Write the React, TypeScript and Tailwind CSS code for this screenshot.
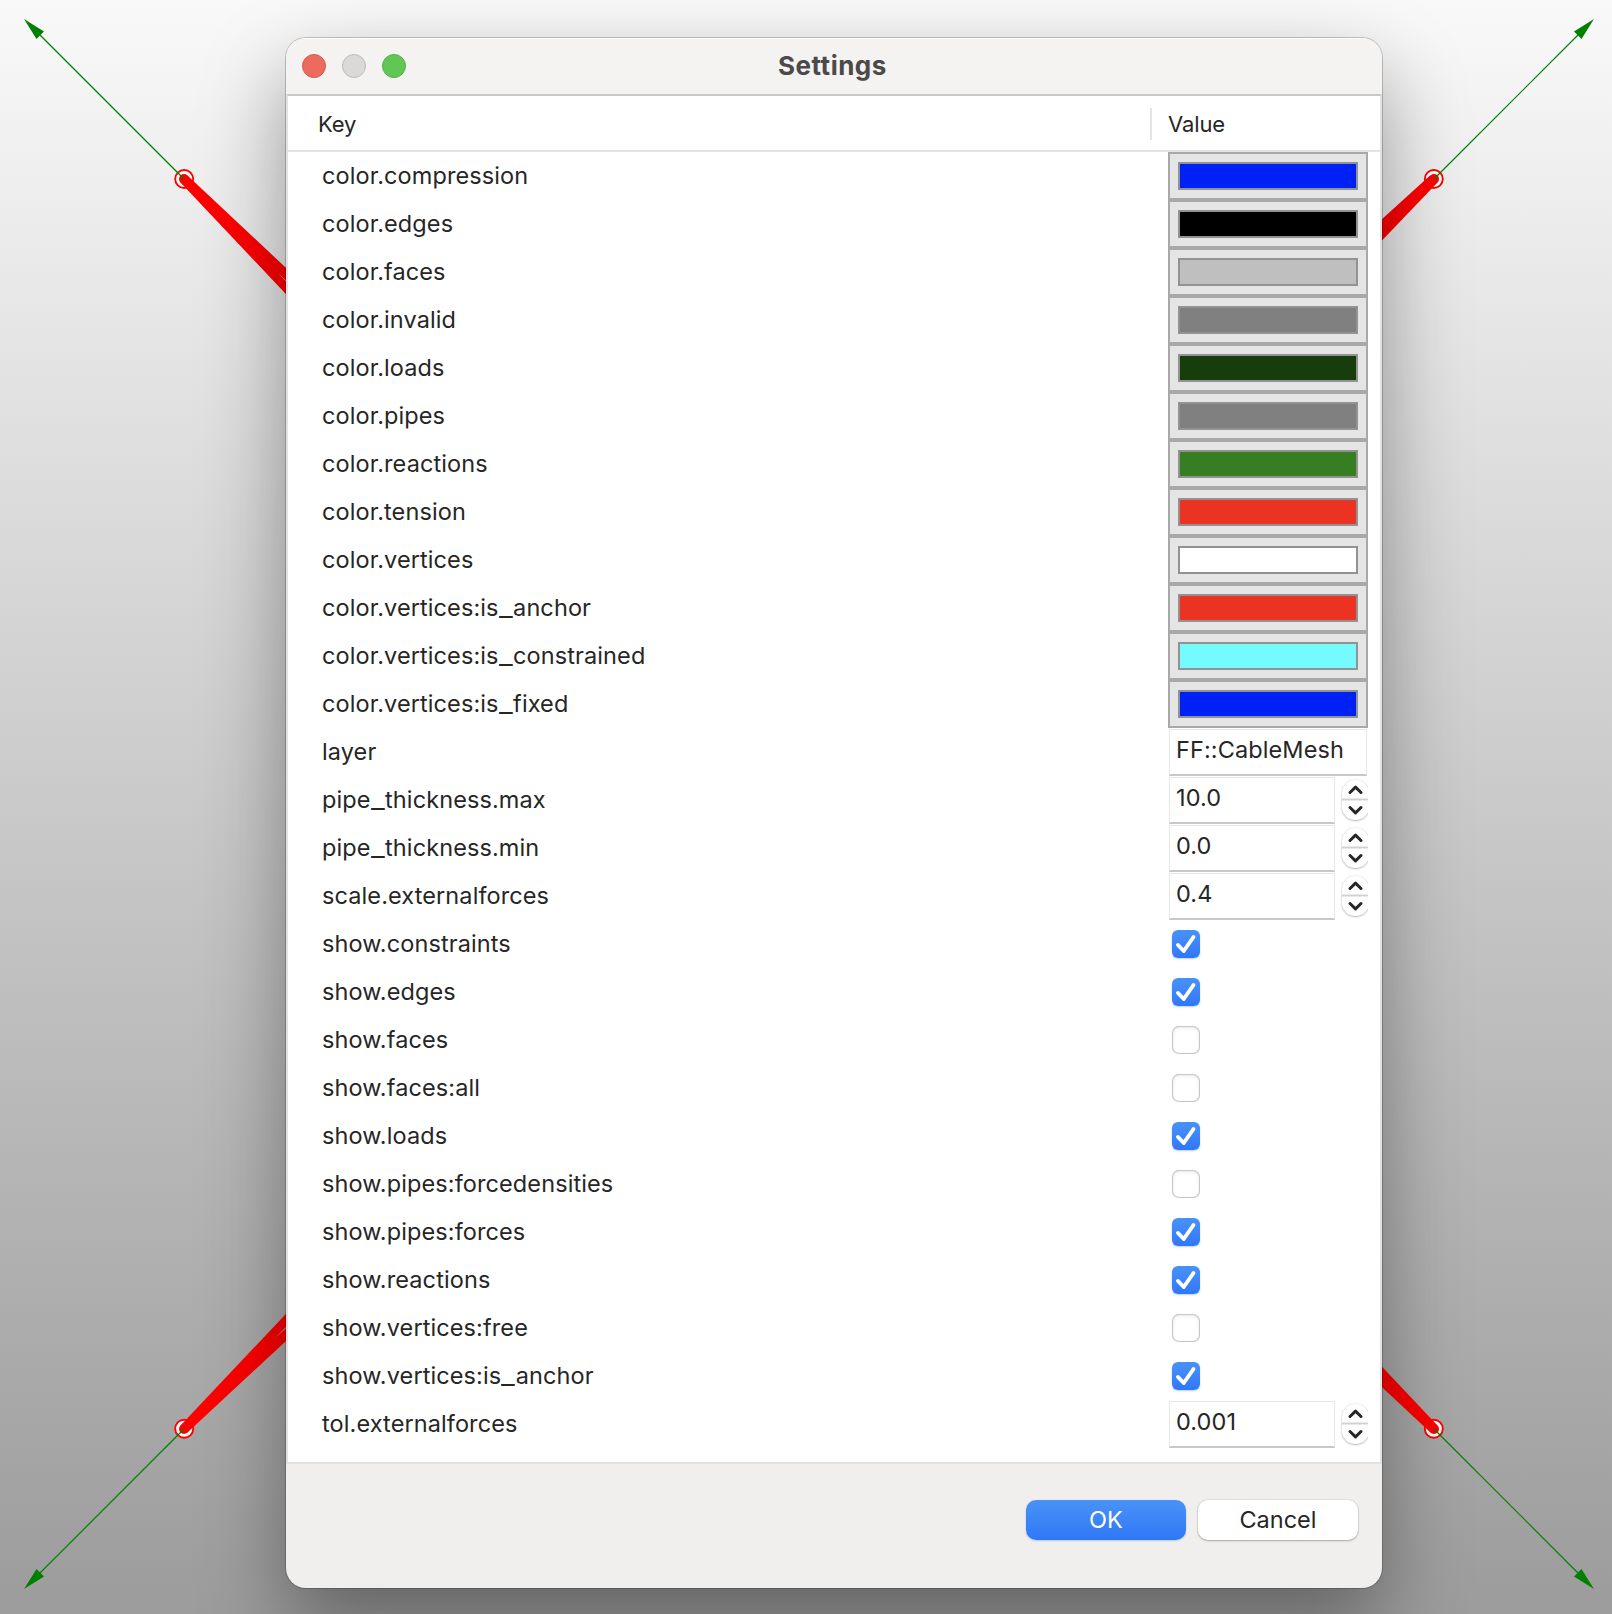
import React from "react";

type Row = { key: string } & (
  | { kind: "color"; value: string }
  | { kind: "text"; value: string }
  | { kind: "number"; value: string }
  | { kind: "check"; value: boolean }
);

const rows: Row[] = [
  { key: "color.compression", kind: "color", value: "#0021f5" },
  { key: "color.edges", kind: "color", value: "#000000" },
  { key: "color.faces", kind: "color", value: "#bfbfbf" },
  { key: "color.invalid", kind: "color", value: "#808080" },
  { key: "color.loads", kind: "color", value: "#183d0c" },
  { key: "color.pipes", kind: "color", value: "#808080" },
  { key: "color.reactions", kind: "color", value: "#377e22" },
  { key: "color.tension", kind: "color", value: "#ea3323" },
  { key: "color.vertices", kind: "color", value: "#ffffff" },
  { key: "color.vertices:is_anchor", kind: "color", value: "#ea3323" },
  { key: "color.vertices:is_constrained", kind: "color", value: "#75fbfd" },
  { key: "color.vertices:is_fixed", kind: "color", value: "#0021f5" },
  { key: "layer", kind: "text", value: "FF::CableMesh" },
  { key: "pipe_thickness.max", kind: "number", value: "10.0" },
  { key: "pipe_thickness.min", kind: "number", value: "0.0" },
  { key: "scale.externalforces", kind: "number", value: "0.4" },
  { key: "show.constraints", kind: "check", value: true },
  { key: "show.edges", kind: "check", value: true },
  { key: "show.faces", kind: "check", value: false },
  { key: "show.faces:all", kind: "check", value: false },
  { key: "show.loads", kind: "check", value: true },
  { key: "show.pipes:forcedensities", kind: "check", value: false },
  { key: "show.pipes:forces", kind: "check", value: true },
  { key: "show.reactions", kind: "check", value: true },
  { key: "show.vertices:free", kind: "check", value: false },
  { key: "show.vertices:is_anchor", kind: "check", value: true },
  { key: "tol.externalforces", kind: "number", value: "0.001" },
];

function Anchor({ x, y }: { x: number; y: number }) {
  return <circle cx={x} cy={y} r="9" fill="#fff" stroke="#f00" strokeWidth="1.9" />;
}

function Viewport() {
  return (
    <svg className="absolute inset-0" width="1612" height="1614" viewBox="0 0 1612 1614">
      <Anchor x={184.2} y={179} />
      <Anchor x={1433.8} y={179} />
      <Anchor x={184.2} y={1428.8} />
      <Anchor x={1433.8} y={1428.8} />
      <g fill="#f00">
        <circle cx="184" cy="179" r="5" />
        <circle cx="1434" cy="179" r="5" />
        <circle cx="184" cy="1429" r="5" />
        <circle cx="1434" cy="1429" r="5" />
        <path d="M187.500 175.500 L300 281 L300 294 L278 273 L300 296 V309 L180.500 182.500 Z" />
        <path d="M1430 175.500 L1370 230 V253 L1437.500 182.500 Z" />
        <path d="M180.500 1425.500 L300 1299 V1313 L274 1339 L300 1316 V1328 L187.500 1432.500 Z" />
        <path d="M1437.500 1425.500 L1370 1354 V1376 L1430.500 1432.500 Z" />
      </g>
      <g stroke="#008000" strokeWidth="1.2" fill="none">
        <path d="M184 179 L38 33" />
        <path d="M1434 179 L1580 33" />
        <path d="M184 1429 L38 1575" />
        <path d="M1434 1429 L1580 1575" />
      </g>
      <g fill="#008000">
        <path d="M24 19 L44 31.500 L36.500 39 Z" />
        <path d="M1594 19 L1574 31.500 L1581.500 39 Z" />
        <path d="M24 1589 L44 1576.500 L36.500 1569 Z" />
        <path d="M1594 1589 L1574 1576.500 L1581.500 1569 Z" />
      </g>
    </svg>
  );
}

function Label({ text }: { text: string }) {
  return (
    <div className="w-[880px] pl-[34px] text-[23.5px] leading-[48px] tracking-[0.1px] text-[#262626]">
      {text.split("_").map((part, i) => (
        <React.Fragment key={i}>
          {i > 0 && <span className="inline-block w-[14.500px] origin-left scale-x-[1.28]">_</span>}
          {part}
        </React.Fragment>
      ))}
    </div>
  );
}

function Swatch({ color }: { color: string }) {
  return (
    <div className="h-12 w-[200px] border-2 border-[#a8a8a8] bg-[#e5e5e5] px-2 pt-2">
      <div className="h-7 border-2 border-[#929292]" style={{ backgroundColor: color }} />
    </div>
  );
}

function Field({ value, wide }: { value: string; wide?: boolean }) {
  return (
    <div
      className={
        (wide ? "w-[198px]" : "w-[166px]") +
        " ml-px mt-px h-[47px] shrink-0 border border-b-2 border-[#e8e8e8] border-b-[#c8c8c8] bg-white pl-[6px] text-[23.5px] leading-[40px] tracking-[0.1px] text-[#262626]"
      }
    >
      {value}
    </div>
  );
}

function Stepper() {
  return (
    <div className="ml-1 mt-px h-[46px] w-[29px] shrink-0 overflow-hidden pl-[3px] pt-[3px]">
      <div className="h-10 w-[27px] rounded-[13px] bg-white shadow-[0_0_1px_0.500px_rgba(0,0,0,0.08),0_1px_2px_rgba(0,0,0,0.24)]">
        <svg width="27" height="40" viewBox="0 0 27 40" fill="none">
          <path d="M0 19.500 H27" stroke="#d2d2d2" strokeWidth="2" />
          <path
            d="M8 12.500 L13.500 7.200 L19 12.500 M8 27.500 L13.500 32.800 L19 27.500"
            stroke="#262626"
            strokeWidth="3"
            strokeLinecap="round"
            strokeLinejoin="round"
          />
        </svg>
      </div>
    </div>
  );
}

function Check({ checked }: { checked: boolean }) {
  if (!checked) {
    return (
      <div className="ml-1 mt-[10px] size-7 rounded-[7px] bg-white shadow-[inset_0_0_0_1px_#c6c6c6,inset_0_1px_4px_rgba(0,0,0,0.14)]" />
    );
  }
  return (
    <div className="ml-1 mt-[10px] size-7 rounded-[6px] bg-linear-to-b from-[#4a92f7] to-[#2f78f6] shadow-[0_1px_2px_rgba(47,120,246,0.35)]">
      <svg width="28" height="28" viewBox="0 0 28 28" fill="none">
        <path
          d="M6 15 L11.700 21 L21.500 7"
          stroke="#fff"
          strokeWidth="3.900"
          strokeLinecap="round"
          strokeLinejoin="round"
        />
      </svg>
    </div>
  );
}

function Value({ row }: { row: Row }) {
  switch (row.kind) {
    case "color":
      return <Swatch color={row.value} />;
    case "text":
      return <Field value={row.value} wide />;
    case "number":
      return (
        <>
          <Field value={row.value} />
          <Stepper />
        </>
      );
    case "check":
      return <Check checked={row.value} />;
  }
}

export default function App() {
  return (
    <div className="relative flex h-[1614px] w-[1612px] overflow-hidden bg-linear-to-b from-[#f9f9f9] to-[#9c9c9c] font-[Inter,sans-serif]">
      <Viewport />
      <div className="relative ml-[286px] mt-[38px] flex h-[1550px] w-[1096px] flex-col overflow-hidden rounded-[20px] bg-[#f0efed] shadow-[0_0_0_1px_rgba(0,0,0,0.2),0_36px_84px_rgba(0,0,0,0.38)]">
        <header className="flex h-14 shrink-0 items-center bg-[#f4f3f1] pl-4 shadow-[inset_0_1px_0_#ffffff]">
          <div className="flex gap-4">
            <span className="size-6 rounded-full border border-[#d9564c] bg-[#ed6a5e]" />
            <span className="size-6 rounded-full border border-[#bcbbb9] bg-[#dad9d7]" />
            <span className="size-6 rounded-full border border-[#54ae47] bg-[#62c655]" />
          </div>
          <h1 className="ml-[372px] pb-px text-[26px] font-bold leading-none tracking-[0.5px] text-[#4b4a49]">
            Settings
          </h1>
        </header>
        <main className="flex h-[1370px] shrink-0 flex-col border-2 border-[#e2e2e2] border-t-[#c9c8c7] bg-white">
          <div className="flex h-[56px] shrink-0 items-center border-b-2 border-[#e4e4e4] pt-0.5 text-[22px] tracking-[-0.1px] text-[#262626]">
            <div className="w-[862px] pl-[30px]">Key</div>
            <div className="h-8 w-0.5 bg-[#e4e4e4]" />
            <div className="pl-4">Value</div>
          </div>
          <div className="flex flex-col">
            {rows.map((row) => (
              <div key={row.key} className="flex h-12">
                <Label text={row.key} />
                <div className="flex w-[200px]">
                  <Value row={row} />
                </div>
              </div>
            ))}
          </div>
        </main>
        <footer className="flex justify-end gap-3 pr-6 pt-9 text-[23.5px]">
          <button className="h-10 w-40 rounded-[10px] bg-linear-to-b from-[#4a92f7] to-[#2f78f6] text-white shadow-[0_1px_2px_rgba(47,120,246,0.3)]">
            OK
          </button>
          <button className="h-10 w-40 rounded-[10px] bg-white text-[#262626] shadow-[0_0_0_1px_rgba(0,0,0,0.06),0_1px_2px_rgba(0,0,0,0.25)]">
            Cancel
          </button>
        </footer>
      </div>
    </div>
  );
}
